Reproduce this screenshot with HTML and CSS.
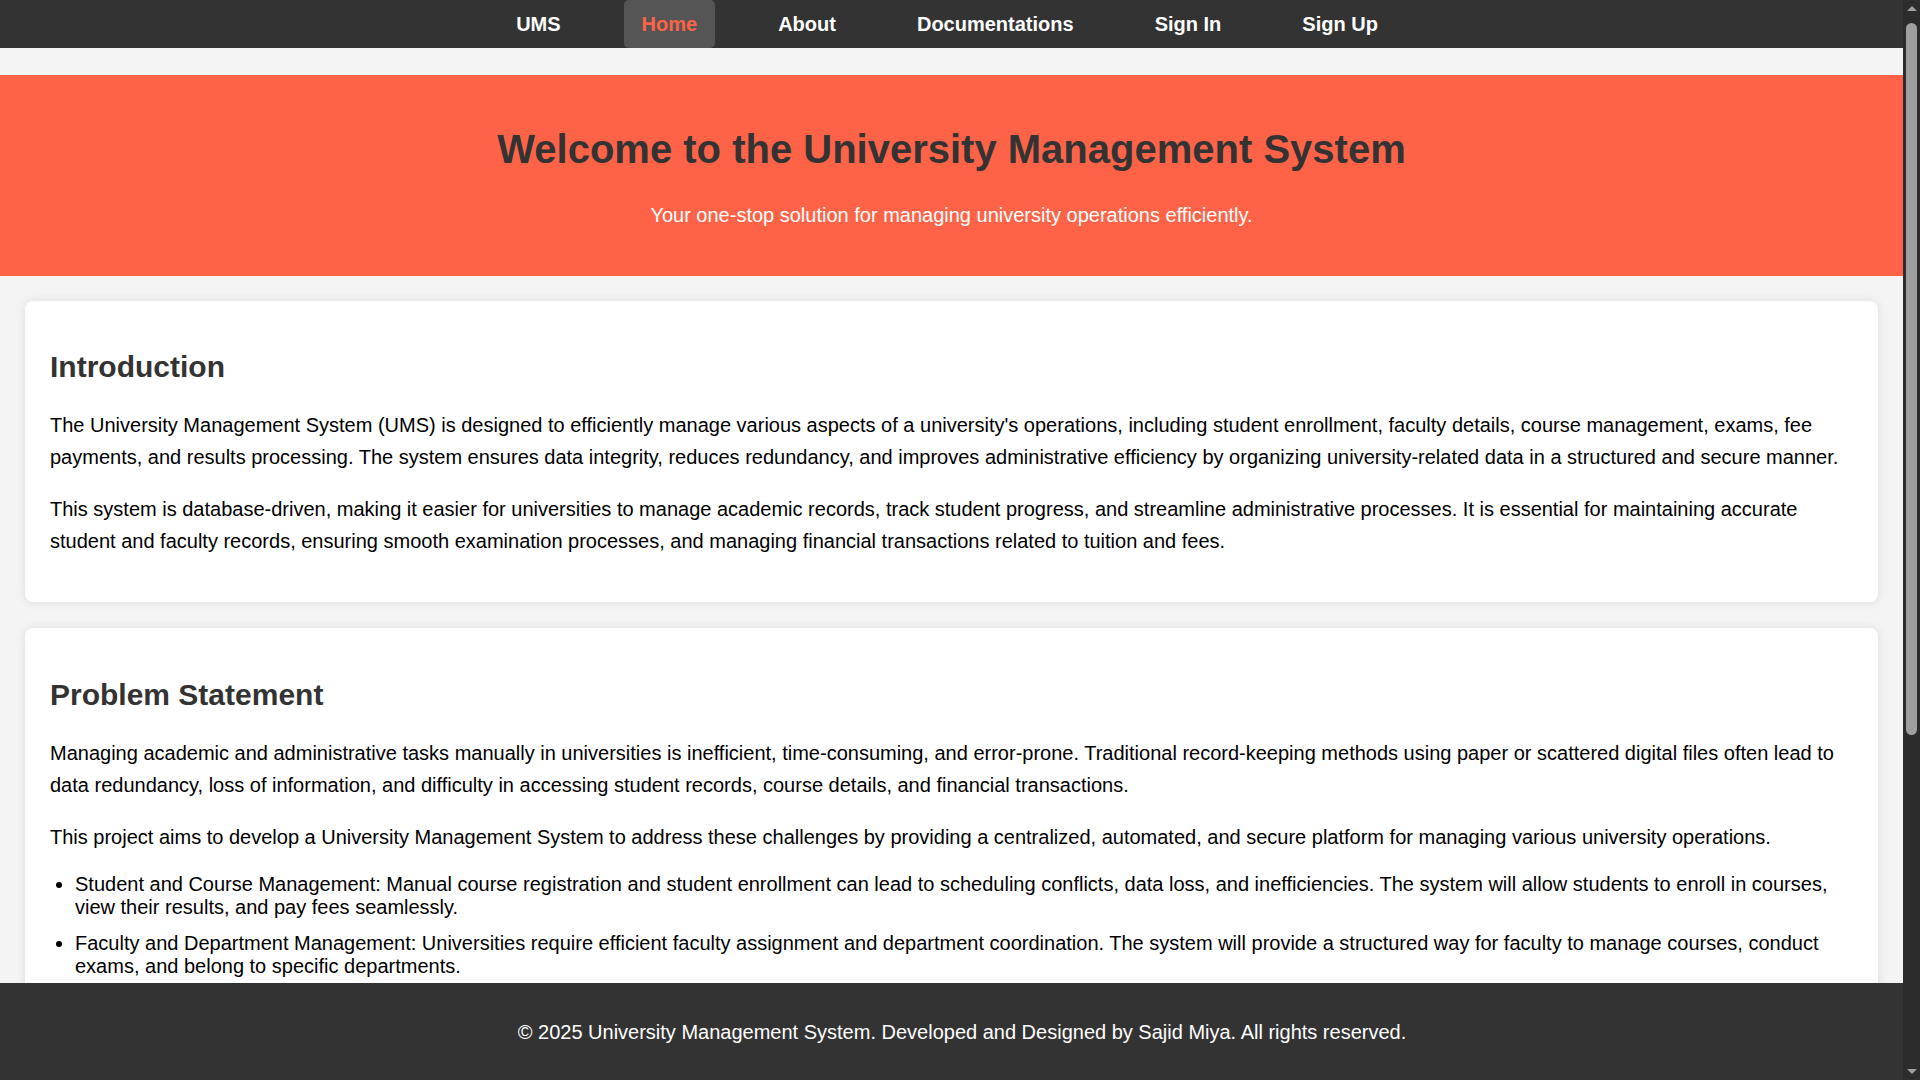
FILE: index.html
```html
<!DOCTYPE html>
<html lang="en">
<head>
<meta charset="UTF-8">
<title>University Management System</title>
<link rel="stylesheet" href="styles.css">
</head>
<body>
<nav class="navbar">
  <ul class="nav-list">
    <li><a class="nav-link" href="#">UMS</a></li>
    <li><a class="nav-link active" href="#">Home</a></li>
    <li><a class="nav-link" href="#">About</a></li>
    <li><a class="nav-link" href="#">Documentations</a></li>
    <li><a class="nav-link" href="#">Sign In</a></li>
    <li><a class="nav-link" href="#">Sign Up</a></li>
  </ul>
</nav>

<header class="hero">
  <h1 class="hero-title">Welcome to the University Management System</h1>
  <p class="hero-sub">Your one-stop solution for managing university operations efficiently.</p>
</header>

<main class="content">
  <section class="card">
    <h2 class="card-title">Introduction</h2>
    <p class="card-text">The University Management System (UMS) is designed to efficiently manage various aspects of a university's operations, including student enrollment, faculty details, course management, exams, fee payments, and results processing. The system ensures data integrity, reduces redundancy, and improves administrative efficiency by organizing university-related data in a structured and secure manner.</p>
    <p class="card-text">This system is database-driven, making it easier for universities to manage academic records, track student progress, and streamline administrative processes. It is essential for maintaining accurate student and faculty records, ensuring smooth examination processes, and managing financial transactions related to tuition and fees.</p>
  </section>

  <section class="card">
    <h2 class="card-title">Problem Statement</h2>
    <p class="card-text">Managing academic and administrative tasks manually in universities is inefficient, time-consuming, and error-prone. Traditional record-keeping methods using paper or scattered digital files often lead to data redundancy, loss of information, and difficulty in accessing student records, course details, and financial transactions.</p>
    <p class="card-text">This project aims to develop a University Management System to address these challenges by providing a centralized, automated, and secure platform for managing various university operations.</p>
    <ul class="card-list">
      <li>Student and Course Management: Manual course registration and student enrollment can lead to scheduling conflicts, data loss, and inefficiencies. The system will allow students to enroll in courses, view their results, and pay fees seamlessly.</li>
      <li>Faculty and Department Management: Universities require efficient faculty assignment and department coordination. The system will provide a structured way for faculty to manage courses, conduct exams, and belong to specific departments.</li>
      <li>Examination and Result Processing: Handling exams and results manually is prone to errors and delays. The system will automate exam scheduling, grade recording, and result publication.</li>
      <li>Fee and Payment Management: Tracking tuition payments and dues manually is difficult. The system will record payments securely and keep accurate financial records.</li>
      <li>Data Security and Integrity: Sensitive academic and personal data must be protected. The system will enforce access control and maintain reliable records.</li>
    </ul>
    <p class="card-text">By implementing this system, universities can reduce administrative workload, minimize errors, and serve students, faculty, and staff better.</p>
  </section>

  <section class="card">
    <h2 class="card-title">Objectives</h2>
    <p class="card-text">The main objective of the University Management System is to provide a single, reliable platform where students, faculty, and administrators can access and manage the information they need. It aims to automate routine tasks, keep records consistent, and make university data available whenever it is required.</p>
    <p class="card-text">The system is built to be secure, scalable, and easy to use for every member of the university community.</p>
  </section>
</main>

<footer class="footer">
  <p class="footer-text">&copy; 2025 University Management System. Developed and Designed by Sajid Miya. All rights reserved.</p>
</footer>

<div class="scrollbar" aria-hidden="true">
  <span class="sb-arrow sb-up"></span>
  <span class="sb-track"><span class="sb-thumb"></span></span>
  <span class="sb-arrow sb-down"></span>
</div>
</body>
</html>
```

FILE: styles.css
```css
body {
  margin: 0 17px 0 0;
  background: #f4f4f4;
  color: #000;
  font-family: "Liberation Sans", Arial, sans-serif;
  font-size: 20px;
  padding-bottom: 110px;
}

.navbar {
  background: #333;
  height: 48px;
}

.nav-list {
  list-style: none;
  margin: 0;
  padding: 0 9px 0 0;
  display: flex;
  justify-content: center;
  gap: 45px;
}

.nav-link {
  display: block;
  padding: 12px 18px;
  line-height: 24px;
  color: #fff;
  font-weight: bold;
  text-decoration: none;
  border-radius: 5px;
}

.nav-link.active {
  background: #555;
  color: #ff6347;
}

.hero {
  margin-top: 27px;
  background: #ff6347;
  padding: 25px;
  text-align: center;
}

.hero-title {
  margin: 0.67em 0;
  font-size: 40px;
  color: #333;
}

.hero-sub {
  margin: 20px 0;
  line-height: 1.6;
  color: #fff;
}

.content {
  padding: 25px 25px 0;
  display: flex;
  flex-direction: column;
  gap: 26px;
}

.card {
  background: #fff;
  border-radius: 8px;
  padding: 25px;
  box-shadow: 0 0 10px rgba(0, 0, 0, 0.1);
}

.card-title {
  margin: 0.83em 0;
  font-size: 30px;
  color: #333;
}

.card-text {
  margin: 20px 0;
  line-height: 1.6;
}

.card-list {
  margin: 20px 0;
  padding-left: 25px;
}

.card-list li {
  margin-bottom: 13px;
}

.footer {
  position: fixed;
  left: 0;
  right: 17px;
  bottom: 0;
  background: #333;
  color: #fff;
  text-align: center;
  padding: 13px 0 12px 21px;
}

.footer-text {
  margin: 20px 0;
  line-height: 1.6;
}

/* window scrollbar */
.scrollbar {
  position: fixed;
  top: 0;
  right: 0;
  width: 17px;
  height: 100vh;
  background: #2c2c2c;
  display: flex;
  flex-direction: column;
}

.sb-arrow {
  flex: none;
  height: 17px;
  display: flex;
  align-items: center;
  justify-content: center;
}

.sb-up::before,
.sb-down::before {
  content: "";
  width: 0;
  height: 0;
  border-left: 5px solid transparent;
  border-right: 5px solid transparent;
}

.sb-up::before {
  border-bottom: 5px solid #a0a0a0;
}

.sb-down::before {
  border-top: 5px solid #a0a0a0;
}

.sb-track {
  flex: 1;
  display: block;
  padding: 6px 3px 0;
}

.sb-thumb {
  display: block;
  height: 712px;
  border-radius: 6px;
  background: #9f9f9f;
}
```
